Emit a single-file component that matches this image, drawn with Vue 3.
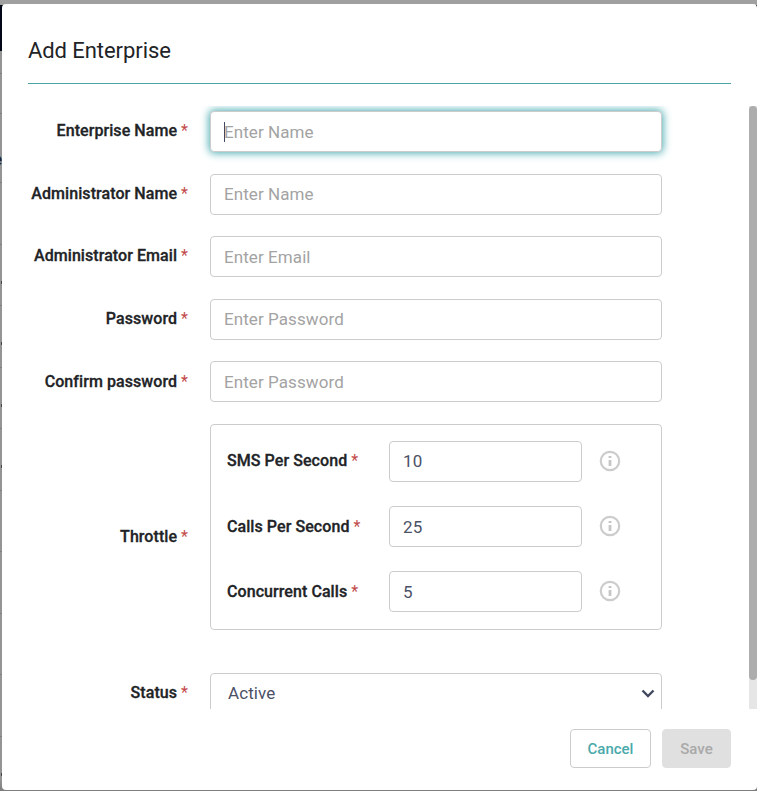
<script setup>
import { ref } from 'vue'

const fields = ref([
  { label: 'Enterprise Name', hint: 'Enter Name', focused: true },
  { label: 'Administrator Name', hint: 'Enter Name', raised: true },
  { label: 'Administrator Email', hint: 'Enter Email' },
  { label: 'Password', hint: 'Enter Password', raised: true },
  { label: 'Confirm password', hint: 'Enter Password', low: true },
])
const limits = ref([
  { label: 'SMS Per Second', value: 10, raised: true },
  { label: 'Calls Per Second', value: 25, low: true },
  { label: 'Concurrent Calls', value: 5, low: true },
])
</script>

<template>
  <div class="backdrop">
    <div class="navbar"></div>
    <div class="page-edge">
      <div class="page-top"></div>
      <div class="page-head"><span>e</span></div>
      <div v-for="n in 10" :key="n" class="page-row" :class="{ marked: (n >= 2 && n <= 5) || n === 10 }"></div>
    </div>
    <section class="modal">
      <header class="head"><h1>Add Enterprise</h1></header>
      <div class="body">
        <div class="form">
          <div v-for="f in fields" :key="f.label" class="row">
            <div class="label" :class="{ low: f.low }"><b>{{ f.label }}</b><i>*</i></div>
            <div class="input" :class="{ focused: f.focused, raised: f.raised }">
              <span v-if="f.focused" class="caret"></span>
              <span class="hint">{{ f.hint }}</span>
            </div>
          </div>
          <div class="row throttle">
            <div class="label"><b>Throttle</b><i>*</i></div>
            <div class="group">
              <div v-for="l in limits" :key="l.label" class="limit">
                <div class="label" :class="{ low: l.low }"><b>{{ l.label }}</b><i>*</i></div>
                <div class="input" :class="{ raised: l.raised }"><span>{{ l.value }}</span></div>
                <svg class="info" viewBox="0 0 22 22">
                  <circle cx="11" cy="11" r="9.2" fill="none" stroke="#ccc" stroke-width="2.2" />
                  <path d="M9.6 6h2.8v2H9.6zM9.6 10h2.8v6H9.6z" fill="#c6c6c6" />
                </svg>
              </div>
            </div>
          </div>
          <div class="row status">
            <div class="label"><b>Status</b><i>*</i></div>
            <div class="input select">
              <span>Active</span>
              <svg class="chevron" viewBox="0 0 14 9">
                <path d="M1.5 1.5 7 7l5.5-5.5" fill="none" stroke="#434a60" stroke-width="2.4" />
              </svg>
            </div>
          </div>
        </div>
        <div class="track"><div class="thumb"></div></div>
      </div>
      <footer class="foot">
        <button class="btn cancel">Cancel</button>
        <button class="btn save" disabled>Save</button>
      </footer>
    </section>
  </div>
</template>

<style>
body { margin: 0; overflow: hidden; }
</style>

<style scoped>
* { box-sizing: border-box; }
.backdrop {
  position: relative;
  width: 757px;
  height: 791px;
  padding: 4px 0 1px 2px;
  overflow: hidden;
  background: linear-gradient(#a0a0a0 0 5px, #949494 5px 780px, #7c7c7c 100%);
  font-family: Roboto, "Liberation Sans", sans-serif;
  color: #212326;
}
.navbar {
  position: absolute;
  left: 0;
  top: 5px;
  width: 100%;
  height: 46px;
  background: #030717;
}
.page-edge {
  position: absolute;
  left: 0;
  top: 51px;
  bottom: 0;
  width: 2px;
  overflow: hidden;
}
.page-top { height: 23px; border-bottom: 1px solid #808080; }
.page-head {
  display: flex;
  justify-content: flex-end;
  height: 109px;
  padding-top: 76px;
  border-bottom: 1px solid #808080;
  background: linear-gradient(#808080, #808080) 0 39px / 100% 1px no-repeat;
  font-weight: 500;
  font-size: 16px;
  line-height: 20px;
  color: #20242f;
}
.page-row { height: 61.5px; border-bottom: 1px solid #808080; }
.marked { background: linear-gradient(#444, #444) 1px 36px / 1px 3px no-repeat; }
.modal {
  position: relative;
  display: flex;
  flex-direction: column;
  width: 755px;
  height: 786px;
  border-radius: 4px;
  background: #fff;
  overflow: hidden;
}
.head {
  height: 80px;
  margin: 0 26px;
  padding-top: 32px;
  border-bottom: 1px solid #4aa3a5;
}
h1 { margin: 0; font-size: 22px; line-height: 30px; font-weight: 400; letter-spacing: -0.07px; }
.body {
  display: flex;
  justify-content: space-between;
  height: 603px;
  margin-top: 22px;
  overflow: hidden;
}
.form { width: 690px; padding-top: 5px; }
.row {
  display: flex;
  gap: 22px;
  height: 41px;
  margin-bottom: 21.5px;
}
.label {
  display: flex;
  flex-shrink: 0;
  justify-content: flex-end;
  gap: 4px;
  width: 186px;
  padding-top: 8px;
  font-size: 16px;
  line-height: 24px;
  white-space: nowrap;
}
.label b { font-weight: 500; letter-spacing: 0.07px; -webkit-text-stroke: 0.3px #212326; }
.label i { font-style: normal; color: #c24a4a; }
.label.low { padding-top: 9px; }
.input {
  position: relative;
  display: flex;
  align-items: center;
  width: 452px;
  height: 41px;
  padding: 1px 13px 0;
  border: 1px solid #ccc;
  border-radius: 4px;
  background: #fff;
  font-size: 17px;
  letter-spacing: 0.08px;
  color: #4b5166;
}
.input.raised { padding-top: 0; padding-bottom: 1px; }
.focused { box-shadow: 0 0 8px 1px #45a9b0; }
.hint { color: #a3a3a3; }
.caret {
  position: absolute;
  left: 13px;
  top: 10px;
  width: 1px;
  height: 20px;
  background: #434a60;
}
.throttle { height: 206px; margin-bottom: 43px; }
.throttle > .label { padding-top: 101px; }
.group {
  display: flex;
  flex-direction: column;
  gap: 24px;
  width: 452px;
  height: 206px;
  padding: 16px;
  border: 1px solid #ccc;
  border-radius: 4px;
}
.limit { display: flex; }
.limit .label { width: 162px; justify-content: flex-start; }
.limit .input { width: 193px; }
.info { width: 22px; height: 22px; margin: 9px 0 0 17px; }
.select { justify-content: space-between; padding: 0 6px 0 17px; }
.chevron { width: 14px; height: 9px; }
.status .label { padding-top: 8px; }
.track { width: 8px; background: #e6e6e6; }
.thumb { height: 574px; border-radius: 4px; background: #adadad; }
.foot {
  display: flex;
  justify-content: flex-end;
  gap: 11px;
  padding: 20px 26px 0 0;
}
.btn {
  height: 39px;
  padding: 0;
  border: 1px solid #ccc;
  border-radius: 4px;
  font: 500 15px Roboto, "Liberation Sans", sans-serif;
}
.cancel { width: 81px; background: #fff; color: #4aa9ab; }
.save { width: 69px; border-color: #e0e0e0; background: #e0e0e0; color: #a9a9a9; }
</style>
